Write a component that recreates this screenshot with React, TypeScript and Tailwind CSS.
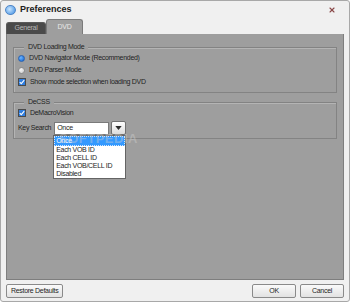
import { X } from 'lucide-react';

function Radio({ checked, label }: { checked?: boolean; label: string }) {
  return (
    <div className="flex items-center gap-[4px] h-[12px]">
      <span
        className={
          checked
            ? 'w-[7px] h-[7px] rounded-full bg-[radial-gradient(circle_at_35%_35%,#6fb6ff,#0a5fd0)] border border-[#2a62b0]'
            : 'w-[7px] h-[7px] rounded-full bg-[radial-gradient(circle_at_35%_35%,#f4f4f4,#c8c8c8)] border border-[#8c8c8c]'
        }
      />
      <span>{label}</span>
    </div>
  );
}

function Check({ label }: { label: string }) {
  return (
    <div className="flex items-center gap-[4px] h-[12px]">
      <span className="w-[8px] h-[8px] border border-[#4a4a4a] bg-[#2f7ee0] flex items-center justify-center">
        <svg viewBox="0 0 8 8" className="w-[6px] h-[6px]">
          <path d="M1 4.2 L3 6.2 L7 1.5" stroke="#fff" strokeWidth="1.4" fill="none" />
        </svg>
      </span>
      <span>{label}</span>
    </div>
  );
}

function Group({ title, className, children }: { title: string; className?: string; children: React.ReactNode }) {
  return (
    <div className={'relative border border-[#838383] shadow-[inset_1px_1px_0_#b4b4b4] ' + (className ?? '')}>
      <span className="absolute -top-[6px] left-[10px] px-[4px] bg-[#9e9e9e] leading-[10px]">{title}</span>
      {children}
    </div>
  );
}

export default function App() {
  return (
    <div
      className="relative w-[350px] h-[302px] bg-[#f0f0f0] border border-[#a8a8a8] rounded-[3px] overflow-hidden text-[7px] tracking-[-0.3px] text-[#1e1e1e]"
      style={{ fontFamily: '"Liberation Sans", Arial, sans-serif' }}
    >
      {/* Title bar */}
      <div className="flex items-center justify-between h-[18px] pl-[4px] pr-[13px]">
        <div className="flex items-center gap-[4px]">
          <span className="w-[11px] h-[10px] rounded-full bg-[radial-gradient(circle_at_40%_40%,#c9e6ff,#3a8ae0)] border border-[#4f86c7]" />
          <span className="font-bold text-[9px] tracking-normal text-[#202020]">Preferences</span>
        </div>
        <X className="w-[8px] h-[8px] text-[#8a4848]" strokeWidth={3.2} />
      </div>

      {/* Tabs */}
      <div className="flex items-end h-[15px] pl-[5px]">
        <div className="w-[40px] h-[12px] bg-[#4a4a4a] rounded-t-[3px] border border-b-0 border-[#5a5a5a] flex items-center justify-center text-[#b8b8b8]">
          General
        </div>
        <div className="w-[37px] h-[15px] bg-[#9e9e9e] rounded-t-[3px] border border-b-0 border-[#7a7a7a] flex items-center justify-center text-[#e8e8e8]">
          DVD
        </div>
      </div>

      {/* Panel */}
      <div className="mx-[5px] h-[246px] bg-[#9e9e9e] border border-[#7e7e7e] border-t-0 pt-[13px] px-[6px] flex flex-col gap-[9px]">
        <Group title="DVD Loading Mode" className="h-[46px] pl-[4px] pt-[4px]">
          <Radio checked label="DVD Navigator Mode (Recommended)" />
          <Radio label="DVD Parser Mode" />
          <Check label="Show mode selection when loading DVD" />
        </Group>

        <Group title="DeCSS" className="h-[37px] pl-[4px] pt-[4px]">
          <Check label="DeMacroVision" />
          <div className="flex items-center gap-[3px] mt-[2px]">
            <span>Key Search</span>
            <div className="relative flex items-center">
              <div className="w-[55px] h-[13px] bg-white border border-[#7a7a7a] flex items-center pl-[2px]">Once</div>
              <div className="ml-[2px] w-[15px] h-[14px] bg-[linear-gradient(#fdfdfd,#dcdcdc)] border border-[#707070] rounded-[2px] flex items-center justify-center">
                <svg viewBox="0 0 8 5" className="w-[7px] h-[4px]">
                  <path d="M0 0 H8 L4 5 Z" fill="#2a2a2a" />
                </svg>
              </div>
              {/* open list */}
              <div className="absolute left-[-1px] top-[14px] w-[73px] bg-white border border-[#646464] z-10 leading-[8px]">
                <div className="bg-[#3399ff] text-white pl-[1px] border border-dotted border-[#cfe6ff]">Once</div>
                <div className="pl-[2px]">Each VOB ID</div>
                <div className="pl-[2px]">Each CELL ID</div>
                <div className="pl-[2px]">Each VOB/CELL ID</div>
                <div className="pl-[2px]">Disabled</div>
              </div>
            </div>
          </div>
        </Group>
      </div>

      {/* Watermark */}
      <div className="absolute left-[58px] top-[131px] text-[13px] leading-[14px] font-bold tracking-[0.5px] text-[#d0d0d0] opacity-40 pointer-events-none z-20">
        SOFTPEDIA
      </div>

      {/* Bottom buttons */}
      <div className="flex items-center justify-between px-[5px] pt-[4px]">
        <button className="h-[14px] px-[4px] bg-[linear-gradient(#fafafa,#e2e2e2)] border border-[#8a8a8a] rounded-[2px]">
          Restore Defaults
        </button>
        <div className="flex gap-[4px]">
          <button className="w-[44px] h-[14px] bg-[linear-gradient(#fafafa,#e2e2e2)] border border-[#8a8a8a] rounded-[2px]">OK</button>
          <button className="w-[44px] h-[14px] bg-[linear-gradient(#fafafa,#e2e2e2)] border border-[#8a8a8a] rounded-[2px]">Cancel</button>
        </div>
      </div>
    </div>
  );
}
